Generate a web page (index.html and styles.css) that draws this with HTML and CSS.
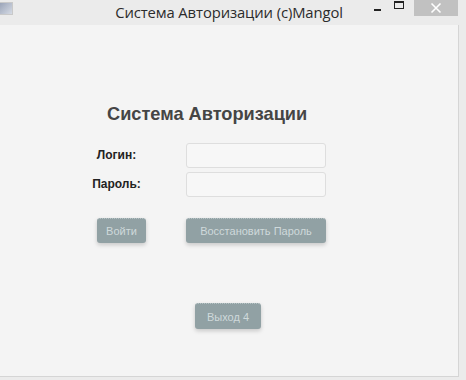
FILE: index.html
```html
<!DOCTYPE html>
<html>
<head>
<meta charset="utf-8">
<link rel="stylesheet" href="styles.css">
</head>
<body>
<div class="window">
  <div class="titlebar">
    <div class="app-icon"></div>
    <div class="title">Система Авторизации (с)Mangol</div>
    <div class="controls">
      <span class="ctl min"><span class="min-bar"></span></span>
      <span class="ctl max"><span class="max-box"></span></span>
      <span class="ctl close">
        <svg width="12" height="12" viewBox="0 0 12 12"><path d="M1.5 1.5 L10.5 10.5 M10.5 1.5 L1.5 10.5" stroke="#fff" stroke-width="1.6"/></svg>
      </span>
    </div>
  </div>
  <div class="content">
    <h1 class="heading">Система Авторизации</h1>
    <div class="form">
      <label class="label">Логин:</label>
      <div class="input"></div>
      <label class="label">Пароль:</label>
      <div class="input"></div>
      <div class="btn-cell"><button class="btn btn-login">Войти</button></div>
      <div class="btn-cell2"><button class="btn btn-recover">Восстановить Пароль</button></div>
    </div>
    <div class="exit-row"><button class="btn btn-exit">Выход 4</button></div>
  </div>
</div>
</body>
</html>
```

FILE: styles.css
```css
html, body {
  margin: 0;
  padding: 0;
  background: #ebebeb;
}
.window {
  width: 466px;
  height: 380px;
  background: #ebebeb;
  position: relative;
  overflow: hidden;
}
.titlebar {
  height: 25px;
  display: flex;
  align-items: flex-start;
  position: relative;
}
.app-icon {
  width: 12px;
  height: 11px;
  margin-top: 2px;
  background: linear-gradient(135deg, #9aa4b8, #d6dbe5);
  border: 1px solid #c9c9c9;
  border-left: none;
}
.title {
  position: absolute;
  left: 0;
  right: 8px;
  top: 2px;
  text-align: center;
  font-family: "Open Sans", "Liberation Sans", sans-serif;
  font-size: 14.8px;
  color: #2b2b2b;
  letter-spacing: -0.1px;
}
.controls {
  position: absolute;
  right: 8px;
  top: 0;
  display: flex;
  align-items: flex-start;
}
.ctl {
  display: flex;
  justify-content: center;
}
.min {
  width: 26px;
  height: 16px;
}
.min-bar {
  width: 7px;
  height: 2px;
  background: #222;
  margin-top: 9px;
}
.max {
  width: 18px;
  height: 16px;
  margin-right: 6px;
}
.max-box {
  width: 8px;
  height: 5px;
  border: 1px solid #222;
  border-top-width: 2px;
  margin-top: 1px;
}
.close {
  width: 44px;
  height: 16px;
  background: #c1c1c1;
  align-items: center;
}
.content {
  width: 458px;
  height: 351px;
  background: #f4f4f4;
  border-right: 1px solid #d5d5d5;
  border-bottom: 1px solid #d5d5d5;
  box-sizing: content-box;
}
.heading {
  margin: 0;
  padding-top: 79px;
  padding-left: 107px;
  font-family: "Liberation Sans", Arial, sans-serif;
  font-weight: bold;
  font-size: 18.2px;
  line-height: 20px;
  color: #454545;
}
.form {
  display: grid;
  grid-template-columns: 63px 140px;
  column-gap: 38px;
  row-gap: 4px;
  margin-top: 19px;
  padding-left: 85px;
}
.label {
  font-family: "Liberation Sans", Arial, sans-serif;
  font-weight: bold;
  font-size: 12px;
  color: #222;
  text-align: center;
  line-height: 25px;
}
.input {
  height: 23px;
  border: 1px solid #dedede;
  border-radius: 3px;
  background: #f7f7f7;
}
.btn-cell {
  display: flex;
  justify-content: flex-start;
  padding-left: 12px;
  margin-top: 17px;
}
.btn-cell2 {
  margin-top: 17px;
}
.btn {
  font-family: "Liberation Sans", Arial, sans-serif;
  font-size: 11px;
  color: #cfd9db;
  background: #91a1a4;
  border: none;
  border-top: 1px dotted #b7c4c6;
  border-radius: 3px;
  height: 25px;
  padding: 0;
  box-shadow: 0 2px 4px rgba(0,0,0,0.18);
}
.btn-login {
  width: 49px;
}
.btn-recover {
  width: 140px;
}
.exit-row {
  display: flex;
  justify-content: flex-start;
  padding-left: 195px;
  margin-top: 60px;
}
.btn-exit {
  width: 66px;
  height: 26px;
}
```
